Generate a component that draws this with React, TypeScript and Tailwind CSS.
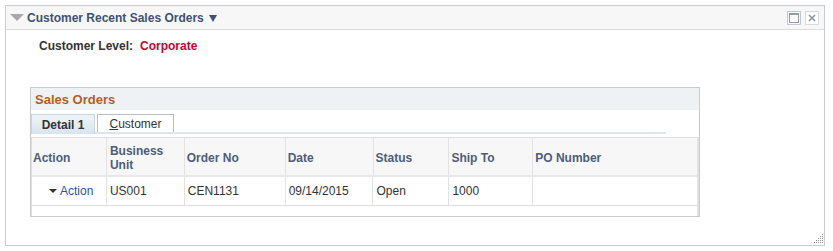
import React from "react";

const cols = [
  { label: "Action", w: 74 },
  { label: "Business Unit", w: 78 },
  { label: "Order No", w: 101 },
  { label: "Date", w: 88 },
  { label: "Status", w: 76 },
  { label: "Ship To", w: 84 },
  { label: "PO Number", w: 165 },
];

export default function App() {
  return (
    <div className="w-[833px] h-[251px] bg-white p-[5px]" style={{ fontFamily: '"Liberation Sans", Arial, sans-serif' }}>
      <div className="w-[820px] h-[241px] border border-[#c9ccd1] flex flex-col relative">
        {/* header */}
        <div className="h-[24px] bg-[#f7f7f7] border-b border-[#dcdcdc] flex items-center pl-[3px] pr-[5px]">
          <svg width="16" height="10" viewBox="0 0 16 10" className="mr-[2px]">
            <path d="M1 1 L15 1 L8 8 Z" fill="#a9a9a9" />
          </svg>
          <span className="text-[12px] font-bold text-[#3e5274]">Customer Recent Sales Orders</span>
          <svg width="10" height="10" viewBox="0 0 10 10" className="ml-[4px] mt-[1px]">
            <path d="M1 2 L9 2 L5 9 Z" fill="#3e5274" />
          </svg>
          <div className="ml-auto flex items-center gap-[4px]">
            <div className="w-[14px] h-[14px] border border-[#c4c8ce] bg-white p-[1px]">
              <div className="w-full h-full border border-[#8b9bb0] border-t-2" />
            </div>
            <div className="w-[14px] h-[14px] border border-[#d6d9dd] bg-white flex items-center justify-center">
              <svg width="8" height="8" viewBox="0 0 8 8">
                <path d="M1 1 L7 7 M7 1 L1 7" stroke="#8d97a3" strokeWidth="1.6" />
              </svg>
            </div>
          </div>
        </div>
        {/* body */}
        <div className="flex flex-col pl-[24px]">
          <div className="flex items-center h-[16px] mt-[8px] pl-[9px] text-[12px] font-bold">
            <span className="text-[#333333]">Customer Level:</span>
            <span className="ml-[7px] text-[#cc0033]">Corporate</span>
          </div>
          <div className="mt-[33px] w-[670px] h-[130px] border border-[#cbcbcb] flex flex-col">
            <div className="h-[22px] bg-[#eef2f4] flex items-center pl-[4px] pt-[1px] text-[13px] font-bold text-[#b45f1d]">
              Sales Orders
            </div>
            <div className="pt-[4px] flex items-end w-[635px] border-b-2 border-[#dbe5f0]">
              <div
                className="h-[20px] w-[64px] mb-[-2px] border border-[#c8d6e6] border-b-0 flex items-center justify-center text-[12px] font-bold text-[#333333]"
                style={{ background: "linear-gradient(#eef3f9,#d8e4f1)" }}
              >
                Detail 1
              </div>
              <div className="ml-[2px] h-[18px] w-[77px] bg-white border border-[#b9bec6] border-b-0 flex items-center justify-center text-[12px] text-[#333333]">
                <span><span className="underline">C</span>ustomer</span>
              </div>
            </div>
            <div className="mt-[3px] flex-1 border-l border-t border-[#e0e0e0] border-r-2 border-r-[#e2e2e2]">
              <div className="flex bg-[#f7f7f7] h-[39px] border-b-2 border-[#e8e8e8]">
                {cols.map((c, i) => (
                  <div
                    key={c.label}
                    className={`flex items-center text-[12px] font-bold text-[#4d5d7b] leading-[14px] ${i > 0 ? "border-l border-[#e2e2e2] pl-[2px]" : "pl-[1px]"}`}
                    style={{ width: c.w, paddingTop: 2 }}
                  >
                    {c.label === "Business Unit" ? (
                      <span className="pl-[1px]">Business<br />Unit</span>
                    ) : (
                      c.label
                    )}
                  </div>
                ))}
              </div>
              <div className="flex h-[29px] bg-white border-b border-[#e0e0e0] text-[12px] text-[#333333]">
                <div className="flex items-center pl-[17px]" style={{ width: cols[0].w }}>
                  <svg width="8" height="5" viewBox="0 0 8 5" className="mr-[3px]">
                    <path d="M0 0 L8 0 L4 4 Z" fill="#333" />
                  </svg>
                  <span className="text-[#1a5a96]">Action</span>
                </div>
                {["US001", "CEN1131", "09/14/2015", "Open", "1000", ""].map((v, i) => (
                  <div key={i} className="flex items-center pl-[3px] border-l border-[#e2e2e2]" style={{ width: cols[i + 1].w }}>
                    {v}
                  </div>
                ))}
              </div>
            </div>
          </div>
        </div>
        <svg width="10" height="10" viewBox="0 0 10 10" className="absolute right-[1px] bottom-[1px]">
          {[[8,0],[6,2],[8,2],[4,4],[6,4],[8,4],[2,6],[4,6],[6,6],[8,6],[0,8],[2,8],[4,8],[6,8],[8,8]].map(([x,y],k)=>(
            <rect key={k} x={x+1} y={y} width="1" height="1" fill="#9a9a9a" />
          ))}
        </svg>
      </div>
    </div>
  );
}
